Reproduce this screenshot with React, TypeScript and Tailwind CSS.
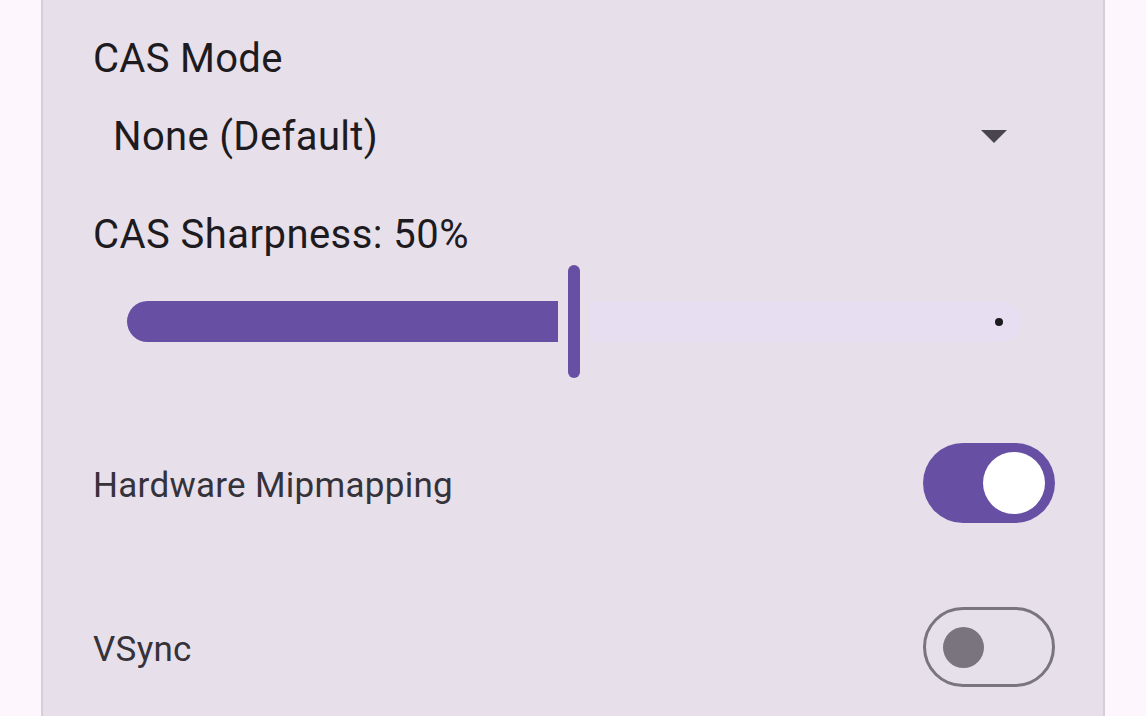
import React from "react";

const Switch: React.FC<{ checked: boolean }> = ({ checked }) =>
  checked ? (
    <div className="flex h-[80px] w-[132px] shrink-0 items-center justify-end rounded-full bg-[#6750a4] pr-[10px]">
      <div className="h-[62px] w-[62px] rounded-full bg-white" />
    </div>
  ) : (
    <div className="flex h-[80px] w-[132px] shrink-0 items-center rounded-full border-[3px] border-[#79747e] bg-[#e6e0ea] pl-[17px]">
      <div className="h-[41px] w-[41px] rounded-full bg-[#79747e]" />
    </div>
  );

const SwitchRow: React.FC<{ label: string; checked: boolean; className?: string }> = ({
  label,
  checked,
  className = "",
}) => (
  <div className={`flex items-center justify-between ${className}`}>
    <span className="pt-[5px] text-[35px] leading-[42px] tracking-[0.28px] text-[#35323a]">{label}</span>
    <Switch checked={checked} />
  </div>
);

export default function App() {
  return (
    <div className="h-[716px] w-[1146px] overflow-hidden bg-[#fdf7fd] font-['Roboto',sans-serif]">
      <div className="ml-[41px] h-full w-[1064px] border-x-2 border-[#d6cfda] bg-[#e7e0eb] pl-[50px] pr-[48px] pt-[35px]">
        <p className="text-[40px] leading-[48px] tracking-[0.3px] text-[#1d1b20]">CAS Mode</p>

        {/* dropdown */}
        <div className="mt-[30px] flex items-center justify-between pl-[20px] pr-[48px]">
          <span className="text-[40px] leading-[48px] tracking-[0.35px] text-[#1d1b20]">None (Default)</span>
          <svg width="26" height="13" viewBox="0 0 26 13" className="mt-[-2px]">
            <path d="M0 0 L26 0 L13 13 Z" fill="#49454f" />
          </svg>
        </div>

        <p className="mt-[50px] text-[40px] leading-[48px] tracking-[0.45px] text-[#1d1b20]">CAS Sharpness: 50%</p>

        {/* slider */}
        <div className="mx-[34px] mt-[6px] flex h-[113px] items-center">
          <div className="h-[41px] flex-1 rounded-l-full rounded-r-[4px] bg-[#6750a4]" />
          <div className="mx-[10px] h-[113px] w-[12px] rounded-full bg-[#6750a4]" />
          <div className="relative h-[41px] flex-1 rounded-l-[4px] rounded-r-full bg-[#e7dff1]">
            <div className="absolute right-[18px] top-1/2 h-[8px] w-[8px] -translate-y-1/2 rounded-full bg-[#1c1b1f]" />
          </div>
        </div>

        <SwitchRow label="Hardware Mipmapping" checked className="mt-[65px]" />
        <SwitchRow label="VSync" checked={false} className="mt-[84px]" />
      </div>
    </div>
  );
}
